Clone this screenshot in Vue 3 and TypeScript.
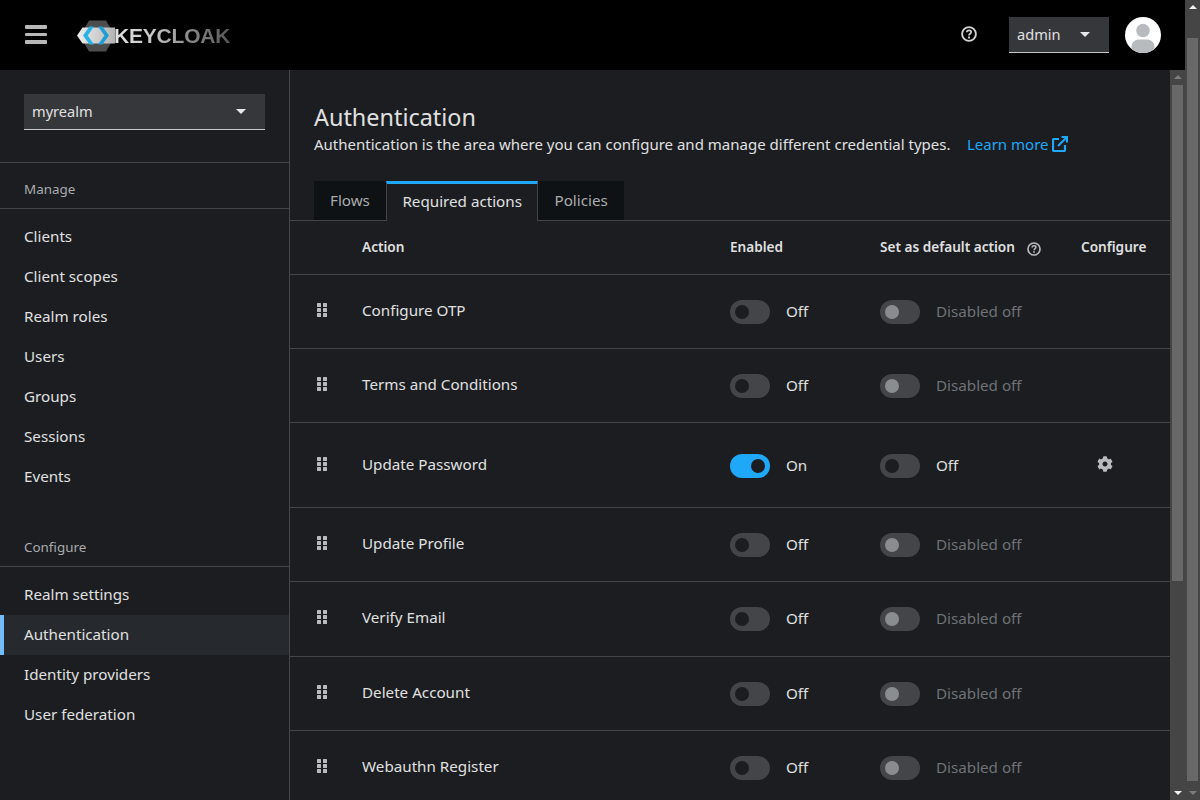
<script setup lang="ts">
interface ActionRow {
  name: string
  enabled: boolean
  hasConfig?: boolean
}

const manageLinks = ['Clients', 'Client scopes', 'Realm roles', 'Users', 'Groups', 'Sessions', 'Events']
const configureLinks = ['Realm settings', 'Authentication', 'Identity providers', 'User federation']
const tabs = ['Flows', 'Required actions', 'Policies']

const rows: ActionRow[] = [
  { name: 'Configure OTP', enabled: false },
  { name: 'Terms and Conditions', enabled: false },
  { name: 'Update Password', enabled: true, hasConfig: true },
  { name: 'Update Profile', enabled: false },
  { name: 'Verify Email', enabled: false },
  { name: 'Delete Account', enabled: false },
  { name: 'Webauthn Register', enabled: false },
]
</script>

<template>
  <div class="page">
    <div class="app">
      <header class="masthead">
        <button class="burger" aria-label="Navigation">
          <span /><span /><span />
        </button>
        <div class="logo">
          <svg class="logo__mark" width="38" height="32" viewBox="0 0 38 32">
            <polygon points="12,0.5 29,0.5 38,16 29,31.5 12,31.5 3,16" fill="#4d4d4d" />
            <polygon points="5.5,7.5 38,7.5 38,23.5 5.5,23.5 0,15.5" fill="url(#logoBand)" />
            <path d="M12.5 6.5 L6 15.5 L12.5 24.5 H17 L10.8 15.5 L17 6.5 Z" fill="#2ab4e6" />
            <path d="M21 6.5 L27.5 15.5 L21 24.5 H25.5 L32 15.5 L25.5 6.5 Z" fill="#1c9fd4" />
            <defs>
              <linearGradient id="logoBand" x1="0" y1="0" x2="1" y2="0">
                <stop offset="0" stop-color="#eeeeee" />
                <stop offset="1" stop-color="#b4b4b4" />
              </linearGradient>
            </defs>
          </svg>
          <span class="logo__text">KEYCLOAK</span>
        </div>
        <div class="masthead__tools">
          <svg class="help-icon" width="16" height="16" viewBox="0 0 16 16" fill="none" stroke="#d2d2d2">
            <circle cx="8" cy="8" r="6.9" stroke-width="1.9" />
            <path d="M5.8 6.3c.1-1.3 1-2 2.3-2 1.2 0 2.1.7 2.1 1.8 0 1.7-2.2 1.6-2.2 3.3" stroke-width="1.7" />
            <path d="M8 10.6v1.8" stroke-width="1.9" />
          </svg>
          <div class="select select--user">
            <span>admin</span>
            <i class="caret" />
          </div>
          <svg class="avatar" width="36" height="36" viewBox="0 0 36 36">
            <defs>
              <clipPath id="avatarClip"><circle cx="18" cy="18" r="18" /></clipPath>
            </defs>
            <circle cx="18" cy="18" r="18" fill="#fff" />
            <g clip-path="url(#avatarClip)" fill="#b8bbbe">
              <circle cx="18" cy="13.5" r="6.8" />
              <path d="M6.5 36v-6c0-5 3.5-7.5 8-7.5h7c4.5 0 8 2.5 8 7.5v6z" />
            </g>
          </svg>
        </div>
      </header>

      <div class="body">
        <aside class="sidebar">
          <div class="realm">
            <div class="select select--realm">
              <span>myrealm</span>
              <i class="caret" />
            </div>
          </div>
          <h2 class="nav-title">Manage</h2>
          <ul class="nav-list">
            <li v-for="link in manageLinks" :key="link" class="nav-item">{{ link }}</li>
          </ul>
          <h2 class="nav-title nav-title--second">Configure</h2>
          <ul class="nav-list">
            <li
              v-for="link in configureLinks"
              :key="link"
              class="nav-item"
              :class="{ 'nav-item--current': link === 'Authentication' }"
            >
              {{ link }}
            </li>
          </ul>
        </aside>

        <main class="content">
          <section class="intro">
            <h1>Authentication</h1>
            <p>
              Authentication is the area where you can configure and manage different credential types.
              <a class="learn">
                Learn more
                <svg width="16" height="16" viewBox="0 0 16 16" fill="none" stroke="#1fa7f8" stroke-width="2.2">
                  <path d="M7 3H2a1 1 0 0 0-1 1v10a1 1 0 0 0 1 1h10a1 1 0 0 0 1-1V9" />
                  <path d="M6 10L14.5 1.5" />
                  <path d="M9.5 1H15v5.5" />
                </svg>
              </a>
            </p>
          </section>

          <nav class="tabs">
            <div
              v-for="tab in tabs"
              :key="tab"
              class="tab"
              :class="{ 'tab--active': tab === 'Required actions' }"
            >
              {{ tab }}
            </div>
          </nav>

          <div class="table">
            <div class="row row--head">
              <div />
              <div class="head-cell">Action</div>
              <div class="head-cell">Enabled</div>
              <div class="head-cell head-help">
                Set as default action
                <svg width="14" height="14" viewBox="0 0 16 16" fill="none" stroke="#b8bbbe">
                  <circle cx="8" cy="8" r="6.9" stroke-width="1.9" />
                  <path d="M5.8 6.3c.1-1.3 1-2 2.3-2 1.2 0 2.1.7 2.1 1.8 0 1.7-2.2 1.6-2.2 3.3" stroke-width="1.8" />
                  <path d="M8 10.6v1.8" stroke-width="2" />
                </svg>
              </div>
              <div class="head-cell head-cell--last">Configure</div>
            </div>

            <div v-for="row in rows" :key="row.name" class="row" :class="{ 'row--tall': row.hasConfig }">
              <div class="grip"><i v-for="n in 6" :key="n" /></div>
              <div class="row__name">{{ row.name }}</div>
              <label class="switch">
                <span class="switch__track" :class="{ 'switch__track--on': row.enabled }"><b /></span>
                <span class="switch__label">{{ row.enabled ? 'On' : 'Off' }}</span>
              </label>
              <label class="switch" :class="{ 'switch--disabled': !row.enabled }">
                <span class="switch__track"><b /></span>
                <span class="switch__label">{{ row.enabled ? 'Off' : 'Disabled off' }}</span>
              </label>
              <div class="row__config">
                <svg v-if="row.hasConfig" width="16" height="16" viewBox="0 0 512 512" fill="#b8bbbe">
                  <path d="M487.4 315.7l-42.6-24.6c4.3-23.2 4.3-47 0-70.2l42.6-24.6c4.9-2.8 7.1-8.6 5.5-14-11.1-35.6-30-67.8-54.7-94.6-3.8-4.1-10-5.1-14.8-2.3L380.8 110c-17.9-15.4-38.5-27.3-60.8-35.1V25.8c0-5.6-3.9-10.5-9.4-11.7-36.7-8.2-74.3-7.8-109.2 0-5.5 1.2-9.4 6.1-9.4 11.7V75c-22.2 7.9-42.8 19.8-60.8 35.1L88.7 85.5c-4.9-2.8-11-1.9-14.8 2.3-24.7 26.7-43.6 58.9-54.7 94.6-1.7 5.4.6 11.2 5.5 14L67.3 221c-4.3 23.2-4.3 47 0 70.2l-42.6 24.6c-4.9 2.8-7.1 8.6-5.5 14 11.1 35.6 30 67.8 54.7 94.6 3.8 4.1 10 5.1 14.8 2.3l42.6-24.6c17.9 15.4 38.5 27.3 60.8 35.1v49.2c0 5.6 3.9 10.5 9.4 11.7 36.7 8.2 74.3 7.8 109.2 0 5.5-1.2 9.4-6.1 9.4-11.7v-49.2c22.2-7.9 42.8-19.8 60.8-35.1l42.6 24.6c4.9 2.8 11 1.9 14.8-2.3 24.7-26.7 43.6-58.9 54.7-94.6 1.5-5.5-.7-11.3-5.6-14.1zM256 336c-44.1 0-80-35.9-80-80s35.9-80 80-80 80 35.9 80 80-35.9 80-80 80z" />
                </svg>
              </div>
            </div>
          </div>
        </main>

        <div class="scrollbar scrollbar--inner">
          <i class="arrow arrow--up arrow--dim" />
          <div class="thumb thumb--inner" />
          <div class="spacer" />
          <i class="arrow arrow--down" />
        </div>
      </div>
    </div>

    <div class="scrollbar scrollbar--outer">
      <i class="arrow arrow--up" />
      <div class="thumb thumb--outer" />
      <div class="spacer" />
      <i class="arrow arrow--down arrow--dim" />
    </div>
  </div>
</template>

<style>
html,
body {
  margin: 0;
  overflow: hidden;
  background: #1b1d21;
}
</style>

<style scoped>
.page {
  display: flex;
  width: 1200px;
  height: 800px;
  overflow: hidden;
  font-family: "Noto Sans", "Open Sans", sans-serif;
  font-size: 15.2px;
  color: #e0e0e0;
  background: #1b1d21;
}

.app {
  display: flex;
  flex-direction: column;
  flex: 1;
  min-width: 0;
}

.masthead {
  display: flex;
  align-items: center;
  flex: none;
  height: 70px;
  padding-left: 25px;
  background: #000;
}

.burger {
  display: flex;
  flex-direction: column;
  gap: 4px;
  width: 22px;
  padding: 0;
  margin-top: -1px;
  border: 0;
  background: none;
}

.burger span {
  display: block;
  height: 3.5px;
  border-radius: 1px;
  background: #b8b8b8;
}

.logo {
  display: flex;
  align-items: center;
  margin-left: 30px;
  margin-top: 2px;
}

.logo__text {
  margin-left: -1px;
  font-family: "Liberation Sans", Arial, sans-serif;
  font-size: 21px;
  font-weight: 700;
  letter-spacing: -0.2px;
  background: linear-gradient(90deg, #e4e4e4 0%, #c4c4c4 35%, #8a8a8a 65%, #565656 100%);
  -webkit-background-clip: text;
  background-clip: text;
  color: transparent;
}

.logo__mark {
  display: block;
}

.masthead__tools {
  display: flex;
  align-items: center;
  margin-left: auto;
  padding-right: 24px;
}

.help-icon {
  margin-right: 32px;
  margin-top: -2px;
}

.select {
  display: flex;
  align-items: center;
  justify-content: space-between;
  box-sizing: border-box;
  height: 36px;
  padding: 0 19px 0 8px;
  border-bottom: 1px solid #c7c7c7;
  font-size: 14.6px;
  background: #36373b;
}

.select span {
  margin-top: -2px;
}

.select--user {
  width: 100px;
  margin-right: 16px;
}

.select--realm {
  width: 241px;
}

.caret {
  width: 0;
  height: 0;
  border-left: 5px solid transparent;
  border-right: 5px solid transparent;
  border-top: 5px solid #e8e8e8;
}

.avatar {
  display: block;
}

.body {
  display: flex;
  flex: 1;
  min-height: 0;
}

.sidebar {
  flex: none;
  box-sizing: border-box;
  width: 290px;
  border-right: 1px solid #444548;
}

.realm {
  box-sizing: border-box;
  height: 93px;
  padding: 24px;
  border-bottom: 1px solid #444548;
}

.nav-title {
  display: flex;
  align-items: center;
  box-sizing: border-box;
  height: 46px;
  margin: 0;
  padding: 6px 24px 0;
  border-bottom: 1px solid #444548;
  font-size: 13.4px;
  font-weight: 400;
  color: #aaabac;
}

.nav-title--second {
  margin-top: 25px;
  height: 45px;
  padding-top: 5px;
}

.nav-list {
  margin: 0;
  padding: 8px 0 0;
  list-style: none;
}

.nav-item {
  display: flex;
  align-items: center;
  box-sizing: border-box;
  height: 40px;
  padding-left: 24px;
  padding-bottom: 2px;
}

.nav-item--current {
  padding-left: 20px;
  border-left: 4px solid #73bcf7;
  background: #26292d;
}

.content {
  flex: 1;
  min-width: 0;
  overflow: hidden;
}

.intro {
  box-sizing: border-box;
  height: 111px;
  padding: 32px 24px 0;
}

.intro h1 {
  margin: 0;
  font-size: 23.4px;
  font-weight: 400;
  line-height: 30px;
}

.intro p {
  margin: 0;
  font-size: 15.03px;
  line-height: 24px;
}

.learn {
  display: inline-flex;
  align-items: center;
  gap: 3px;
  margin-left: 12.5px;
  color: #1fa7f8;
}

.tabs {
  display: flex;
  box-sizing: border-box;
  height: 40px;
  padding-left: 24px;
  border-bottom: 1px solid #444548;
}

.tab {
  display: flex;
  align-items: center;
  box-sizing: border-box;
  height: 39px;
  padding: 0 16px 2px;
  background: #0f1214;
  color: #aaabac;
}

.tab--active {
  height: 40px;
  padding: 0 15.5px 3px;
  border-top: 3px solid #1fa7f8;
  border-left: 1px solid #444548;
  border-right: 1px solid #444548;
  background: #1b1d21;
  color: #e0e0e0;
}

.row {
  display: grid;
  grid-template-columns: 72px 368px 150px 200px 1fr;
  align-items: center;
  box-sizing: border-box;
  height: 74.2px;
  border-bottom: 1px solid #444548;
}

.row--head {
  height: 54px;
  font-size: 13.6px;
  font-weight: 600;
}

.head-cell {
  margin-top: -2px;
}

.head-cell--last {
  padding-left: 1px;
}

.row--tall {
  height: 84.8px;
}

.head-help {
  display: flex;
  align-items: center;
  gap: 12px;
}

.head-help svg {
  margin-top: 4px;
}

.row__name {
  margin-top: -3px;
}

.grip {
  display: grid;
  grid-template-columns: 4px 4px;
  grid-auto-rows: 4px;
  gap: 1px 2px;
  justify-content: start;
  margin-left: 27px;
  margin-top: -3px;
}

.grip i {
  background: #b8bbbe;
  border-radius: 0.5px;
}

.switch {
  display: flex;
  align-items: center;
  gap: 16px;
  margin-top: 1px;
}

.switch__label {
  margin-top: -2px;
}

.switch__track {
  display: flex;
  align-items: center;
  box-sizing: border-box;
  width: 40px;
  height: 24px;
  padding: 0 5px;
  border-radius: 12px;
  background: #444548;
}

.switch__track b {
  display: block;
  width: 14px;
  height: 14px;
  border-radius: 50%;
  background: #1b1d21;
}

.switch__track--on {
  justify-content: flex-end;
  background: #1fa7f8;
}

.switch--disabled {
  color: #6f7276;
}

.switch--disabled b {
  background: #8a8d90;
}

.row__config {
  display: flex;
  padding-left: 17px;
  margin-top: -3px;
}

.scrollbar {
  display: flex;
  flex-direction: column;
  align-items: center;
  flex: none;
  box-sizing: border-box;
  width: 15px;
  background: #454545;
}

.spacer {
  flex: 1;
}

.arrow {
  flex: none;
  width: 0;
  height: 0;
  margin: 5px 0;
  border-left: 4px solid transparent;
  border-right: 4px solid transparent;
}

.arrow--up {
  border-bottom: 4px solid #f0f0f0;
}

.arrow--down {
  border-top: 4px solid #f0f0f0;
}

.arrow--up.arrow--dim {
  border-bottom-color: #7c7c7c;
}

.arrow--down.arrow--dim {
  border-top-color: #7c7c7c;
}

.thumb {
  flex: none;
  width: 11px;
  background: #686868;
}

.thumb--inner {
  height: 496px;
  margin-top: 1px;
}

.thumb--outer {
  height: 743px;
  margin-top: 24px;
}
</style>
